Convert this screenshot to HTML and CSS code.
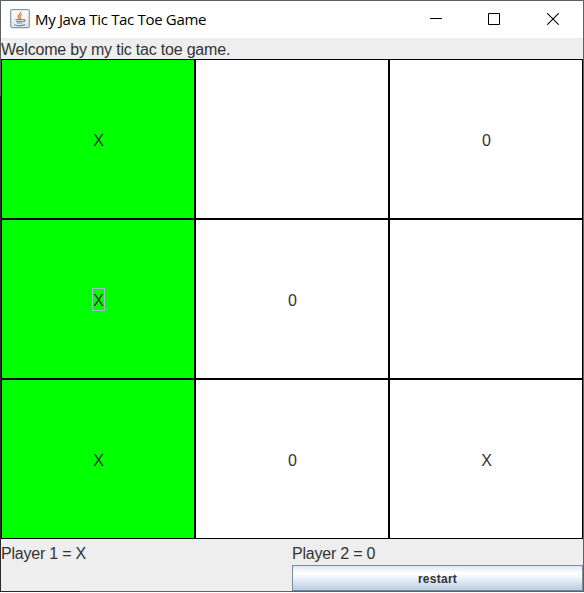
FILE: index.html
```html
<!DOCTYPE html>
<html lang="en">
<head>
<meta charset="utf-8">
<title>My Java Tic Tac Toe Game</title>
<link rel="stylesheet" href="styles.css">
</head>
<body>
<div class="frame">
<div class="window">
  <header class="titlebar">
    <svg class="app-icon" width="20" height="20" viewBox="0 0 20 20">
      <defs><linearGradient id="tile" x1="0" y1="0" x2="0" y2="1"><stop offset="0" stop-color="#fff"/><stop offset="1" stop-color="#dfe5ea"/></linearGradient></defs>
      <rect x=".7" y=".7" width="18.6" height="17.9" rx="1.5" fill="url(#tile)" stroke="#8199ad" stroke-width="1.2"/>
      <path d="M10.8 2.8c.7 1.9-3.1 2.8-2.8 4.6.1 1 1.3 1.6 1.5 2.6M12 5.4c-1.6.7-2.3 1.4-1.8 2.4.4.8.4 1.2-.1 2" fill="none" stroke="#e6914b" stroke-width="1.5"/>
      <path d="M5.5 10.7h7.5M6 12.5h6.5M6.8 14h5.4M4.2 15.8c3 1 8 1 11-.2M13.3 10.7c2.3-.6 2.3 1.7-.2 2.2" fill="none" stroke="#6d8fa9" stroke-width="1.2"/>
    </svg>
    <h1 class="title">My Java Tic Tac Toe Game</h1>
    <div class="controls">
      <svg width="12" height="12" viewBox="0 0 12 12"><path d="M0 5.5h12" stroke="#000"/></svg>
      <svg width="12" height="12" viewBox="0 0 12 12"><path d="M.5.5h11v11H.5z" fill="none" stroke="#000"/></svg>
      <svg class="close" width="12" height="12" viewBox="0 0 12 12"><path d="M.3.3l11.4 11.4M11.7.3L.3 11.7" stroke="#000" stroke-width="1.05"/></svg>
    </div>
  </header>
  <p class="message">Welcome by my tic tac toe game.</p>
  <main class="board">
    <div class="cell win"><span>X</span></div>
    <div class="cell"></div>
    <div class="cell"><span>0</span></div>
    <div class="cell win"><span class="focus">X</span></div>
    <div class="cell"><span>0</span></div>
    <div class="cell"></div>
    <div class="cell win"><span>X</span></div>
    <div class="cell"><span>0</span></div>
    <div class="cell"><span>X</span></div>
  </main>
  <footer class="footer">
    <div class="player">Player 1 = X</div>
    <div class="player">Player 2 = 0</div>
    <button class="restart">restart</button>
  </footer>
</div>
</div>
</body>
</html>
```
FILE: styles.css
```css
* { box-sizing: border-box; }
body {
  margin: 0;
  background: #fff;
  overflow: hidden;
  font: 16px/20px "Liberation Sans", Arial, sans-serif;
  color: #333;
}
.frame {
  width: 584px;
  height: 592px;
  padding: 1px;
  background:
    linear-gradient(#29282a, #29282a) 0 100% / 80px 1px no-repeat,
    linear-gradient(#606060 96px, #29282a 96px) 0 0 / 1px 100% no-repeat,
    #606060;
}
.window {
  height: 590px;
  display: flex;
  flex-direction: column;
  background: #eee;
}
.titlebar {
  height: 37px;
  display: flex;
  align-items: center;
  background: #fff;
  padding: 0 24px 0 9px;
}
.app-icon { display: block; margin-top: -1px; }
.title {
  margin: -2px 0 0 5px;
  font: 400 15px/20px "Open Sans", "Noto Sans", sans-serif;
  letter-spacing: -0.33px;
  color: #000;
  white-space: nowrap;
}
.controls {
  margin: -1px 0 0 auto;
  display: flex;
  gap: 46px;
}
.controls svg { display: block; }
.controls .close { margin-left: 1px; }
.message {
  margin: 0;
  height: 21px;
  padding-top: 2px;
  letter-spacing: -0.2px;
}
.board {
  display: grid;
  grid-template-columns: repeat(3, 194px);
  grid-template-rows: repeat(3, 160px);
}
.cell {
  display: flex;
  align-items: center;
  justify-content: center;
  border: 1px solid #000;
  background: #fff;
}
.cell span { padding: 4px 0 0 1px; }
.win { background: #0f0; }
.cell .focus {
  width: 13px;
  height: 23px;
  padding: 2px 0 0 1px;
  border: 1px solid #a3b8cc;
  display: flex;
  justify-content: center;
}
.footer {
  display: grid;
  grid-template-columns: 291px 291px;
  grid-template-rows: 26px 26px;
}
.player { padding-top: 5px; letter-spacing: -0.22px; }
.restart {
  grid-column: 2;
  border: 1px solid #7a8a99;
  border-radius: 0;
  padding: 2px 0 0;
  font: bold 12px/22px "Liberation Sans", Arial, sans-serif;
  letter-spacing: 0.25px;
  color: #333;
  background: linear-gradient(#dde8f3 0%, #fff 30%, #fff 32%, #b8cfe5 100%);
}
```
